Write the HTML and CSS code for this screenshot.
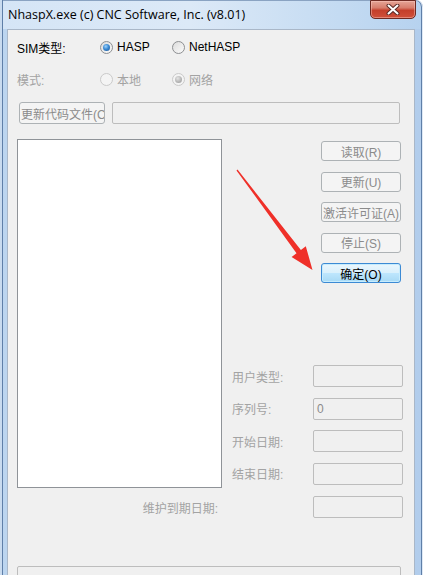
FILE: index.html
```html
<!DOCTYPE html>
<html lang="zh-CN">
<head>
    <meta charset="UTF-8">
    <meta name="viewport" content="width=device-width, initial-scale=1.0">
    <title>NhaspX</title>
    <link rel="stylesheet" href="styles.css">
</head>
<body>

    <div class="window">
        <!-- Title bar -->
        <div class="titlebar">
            <span class="title">NhaspX.exe (c) CNC Software, Inc. (v8.01)</span>
            <button class="close" title="关闭">
                <svg width="14" height="11" viewBox="0 0 14 11">
                    <path d="M2.5 1.5 L11.5 9.5 M11.5 1.5 L2.5 9.5" stroke="#5a2a26" stroke-width="4" stroke-linecap="round"/>
                    <path d="M2.5 1.5 L11.5 9.5 M11.5 1.5 L2.5 9.5" stroke="#fff" stroke-width="2" stroke-linecap="round"/>
                </svg>
            </button>
        </div>

        <!-- Dialog body -->
        <div class="client">
            <div class="row">
                <span class="label">SIM类型:</span>
                <label class="option"><span class="radio checked"></span>HASP</label>
                <label class="option"><span class="radio"></span>NetHASP</label>
            </div>

            <div class="row row-mode disabled">
                <span class="label">模式:</span>
                <label class="option"><span class="radio"></span>本地</label>
                <label class="option"><span class="radio checked"></span>网络</label>
            </div>

            <div class="row row-file">
                <button class="btn btn-file" disabled>更新代码文件(C</button>
                <div class="field field-path"></div>
            </div>

            <div class="main">
                <div class="listbox"></div>

                <div class="side">
                    <div class="actions">
                        <button class="btn" disabled>读取(R)</button>
                        <button class="btn" disabled>更新(U)</button>
                        <button class="btn" disabled>激活许可证(A)</button>
                        <button class="btn" disabled>停止(S)</button>
                        <button class="btn btn-default">确定(O)</button>
                    </div>

                    <div class="info">
                        <div class="info-row"><span class="info-label">用户类型:</span><div class="field"></div></div>
                        <div class="info-row"><span class="info-label">序列号:</span><div class="field">0</div></div>
                        <div class="info-row"><span class="info-label">开始日期:</span><div class="field"></div></div>
                        <div class="info-row"><span class="info-label">结束日期:</span><div class="field"></div></div>
                    </div>
                </div>

                <span class="expiry-label">维护到期日期:</span>
                <div class="expiry"><div class="field"></div></div>
            </div>

            <div class="field field-status"></div>
        </div>

        <!-- Red annotation arrow -->
        <svg class="arrow" width="423" height="575" viewBox="0 0 423 575">
            <polygon points="236.5,170.4 296.5,253.3 291.6,257 312.5,270 305.8,246.2 300.9,249.9 237.5,169.6" fill="#ef3029"/>
        </svg>
    </div>

</body>
</html>
```

FILE: styles.css
```css
/* Reset */
* {
    margin: 0;
    padding: 0;
    box-sizing: border-box;
}

body {
    font-family: "Liberation Sans", "Noto Sans CJK SC", sans-serif;
    font-size: 12px;
    color: #000;
    background: #fff;
}

/* Window frame */
.window {
    position: relative;
    width: 423px;
    height: 575px;
    display: flex;
    flex-direction: column;
    padding: 0 8px 0 7px;
    border-radius: 0 7px 0 0;
    background:
        linear-gradient(90deg, #d5e5f6 0, #dce9f7 45%, #c4dbf2 80%, #b6d2ef 100%) top / 100% 29px no-repeat,
        linear-gradient(90deg, #bcd5ef 0, #b2cdec 100%);
    box-shadow: inset 2px 0 0 #c9dbef, inset 3px 0 0 #5f7fa8,
                inset -1px 0 0 #dfe9f5, inset -2px 0 0 #5f7fa8,
                inset 0 1px 0 #8aa3c2;
    overflow: hidden;
}

.titlebar {
    height: 29px;
    display: flex;
    align-items: flex-start;
}

.title {
    font-family: "Open Sans", "Liberation Sans", sans-serif;
    font-size: 12.5px;
    line-height: 30px;
    padding-left: 1px;
    color: #000;
}

.close {
    margin-left: auto;
    margin-right: -1px;
    width: 46px;
    height: 19px;
    display: flex;
    align-items: center;
    justify-content: center;
    border: 1px solid #6e2a22;
    border-radius: 0 0 5px 5px;
    background: linear-gradient(180deg, #e5a597 0, #d77d6c 40%, #c43f2b 55%, #d0503a 100%);
    box-shadow: inset 0 0 0 1px rgba(255, 205, 195, 0.45);
}

/* Client area */
.client {
    flex: 1;
    background: #f0f0f0;
    border: 1px solid #a9b7c8;
    border-bottom: none;
    padding: 7px 0 0 9px;
}

.row {
    height: 20px;
    display: flex;
    align-items: center;
}

.row-mode {
    margin-top: 12px;
}

.row-file {
    margin-top: 13px;
    height: 22px;
}

.label {
    width: 83px;
}

.option {
    width: 72px;
    display: flex;
    align-items: center;
    gap: 4px;
}

.disabled {
    color: #a3a3a3;
}

/* Radio buttons */
.radio {
    width: 13px;
    height: 13px;
    border-radius: 50%;
    border: 1px solid #8d8f92;
    background: linear-gradient(135deg, #dcdcdc, #fbfbfb);
    display: flex;
    align-items: center;
    justify-content: center;
}

.radio.checked::after {
    content: "";
    width: 7px;
    height: 7px;
    border-radius: 50%;
    background: radial-gradient(circle at 40% 35%, #9fd2fa 0, #3a8ad4 45%, #1b4f8c 100%);
}

.disabled .radio {
    border-color: #cacaca;
    background: #f4f4f4;
}

.disabled .radio.checked::after {
    background: radial-gradient(circle at 40% 35%, #e4e4e4 0, #b3b3b3 60%, #9a9a9a 100%);
}

/* Buttons and fields */
.btn {
    font-family: inherit;
    font-size: 12px;
    height: 20px;
    border: 1px solid #adb2b5;
    border-radius: 3px;
    background: #f4f4f4;
    color: #8b8b8b;
    white-space: nowrap;
    overflow: hidden;
}

.btn-file {
    margin-left: 2px;
    width: 86px;
    height: 22px;
    padding: 0 1px;
    text-align: left;
}

.btn-default {
    color: #000;
    border-color: #3c8ad4;
    background: linear-gradient(180deg, #eaf6fd 0, #d9f0fc 50%, #bee6fd 51%, #a7d9f5 100%);
    box-shadow: inset 0 0 0 1px #c7ecfd;
}

.field {
    height: 22px;
    border: 1px solid #bdbdbd;
    border-radius: 2px;
    background: #f0f0f0;
    color: #8b8b8b;
    padding: 2px 3px;
    line-height: 16px;
}

.field-path {
    margin-left: 7px;
    width: 288px;
}

/* Main area */
.main {
    margin-top: 15px;
    display: grid;
    grid-template-columns: 205px 171px;
    column-gap: 10px;
    row-gap: 8px;
}

.listbox {
    height: 349px;
    background: #fff;
    border: 1px solid #8f9398;
}

.side {
    display: flex;
    flex-direction: column;
}

.actions {
    margin-top: 2px;
    padding-left: 89px;
    display: flex;
    flex-direction: column;
    gap: 10.5px;
}

.actions .btn {
    width: 80px;
}

.info {
    margin-top: 82px;
    display: flex;
    flex-direction: column;
    gap: 10.5px;
}

.info-row {
    display: flex;
    align-items: center;
}

.info-label,
.expiry-label {
    color: #a3a3a3;
}

.info-label {
    width: 81px;
}

.info-row .field,
.expiry .field {
    width: 90px;
}

.expiry-label {
    align-self: center;
    text-align: right;
    padding-right: 4px;
}

.expiry {
    padding-left: 81px;
}

.field-status {
    margin-top: 48px;
    width: 384px;
    height: 30px;
}

/* Annotation overlay */
.arrow {
    position: absolute;
    left: 0;
    top: 0;
    pointer-events: none;
}
```
